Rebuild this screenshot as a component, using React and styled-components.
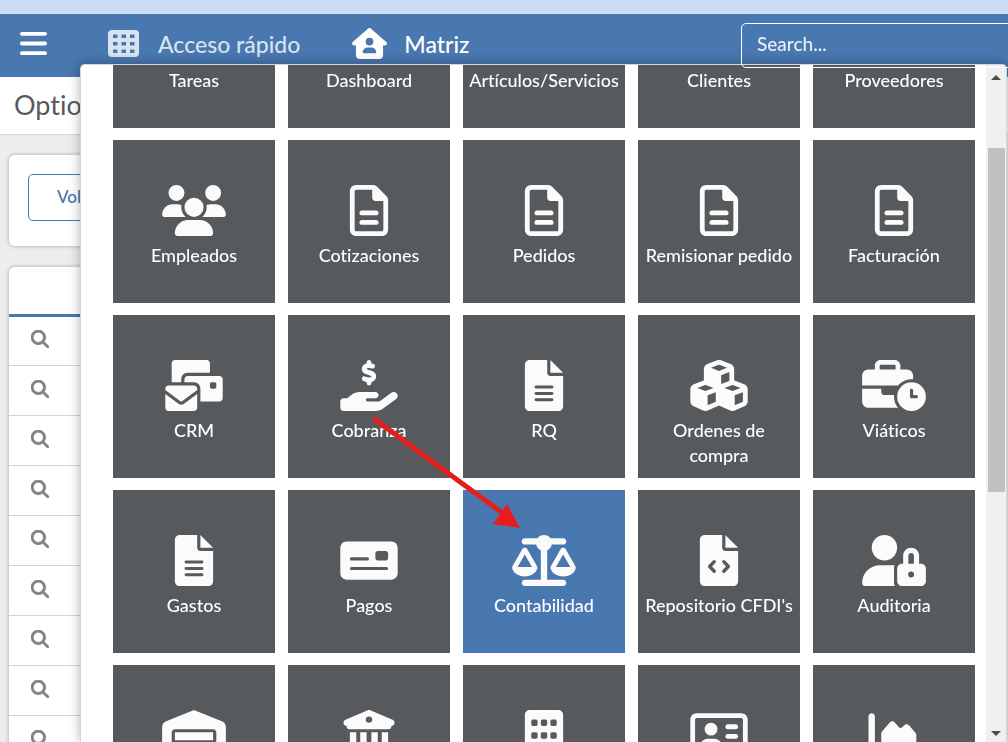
import React, { useLayoutEffect, useRef } from 'react';
import styled, { createGlobalStyle } from 'styled-components';
import {
    FaBars,
    FaBoxOpen,
    FaBuilding,
    FaBuildingColumns,
    FaBusinessTime,
    FaChartArea,
    FaChartPie,
    FaCubes,
    FaEnvelopesBulk,
    FaHandHoldingDollar,
    FaHouseUser,
    FaListCheck,
    FaMagnifyingGlass,
    FaMoneyCheck,
    FaRegAddressCard,
    FaRegFileLines,
    FaScaleBalanced,
    FaTruck,
    FaUserTie,
    FaUsers,
    FaWarehouse,
} from 'react-icons/fa6';

const GlobalStyle = createGlobalStyle`
    * {
        box-sizing: border-box;
    }

    body {
        margin: 0;
        background: #ededed;
        color: #575a5d;
        font-family: "Trebuchet MS", Lato, sans-serif;
        font-size: 18px;
        font-variant-ligatures: none;
    }

    button,
    input {
        font: inherit;
        font-variant-ligatures: none;
    }
`;

const Page = styled.div`
    height: 100vh;
    overflow: hidden;
    border-top: 14px solid #cbdcf6;
`;

const Header = styled.header`
    display: flex;
    align-items: center;
    height: 63px;
    padding-left: 20px;
    background: #4977b0;
    color: #fff;
`;

const MenuButton = styled.button`
    display: flex;
    padding: 0 0 4px;
    margin-right: 59px;
    border: none;
    background: none;
    color: inherit;
    cursor: pointer;

    svg {
        width: 27px;
        height: 31px;
    }
`;

const Nav = styled.nav`
    display: flex;
    flex: 1;
    gap: 52px;
    padding-bottom: 4px;
`;

const NavLink = styled.a`
    display: flex;
    align-items: center;
    gap: 17px;
    color: ${(props) => props.$active ? '#fff' : '#d9e2ef'};
    font-size: 23px;
    font-weight: 500;
    line-height: 32px;
    text-decoration: none;

    svg {
        width: 35px;
        height: 31px;
    }
`;

const SearchInput = styled.input`
    position: relative;
    z-index: 3;
    flex: none;
    width: 300px;
    height: 45px;
    margin-right: -33px;
    padding: 0 15px 4px;
    border: 1px solid #fff;
    border-radius: 5px;
    outline: none;
    background: transparent;
    color: #fff;
    font-size: 19px;
    font-weight: 500;

    &::placeholder {
        color: #e9eff7;
        opacity: 1;
    }
`;

const TitleBar = styled.div`
    height: 58px;
    padding: 0 14px;
    border-bottom: 1px solid #d6d6d6;
    background: #fff;
`;

const Title = styled.h1`
    margin: 0;
    font-size: 27px;
    font-weight: 400;
    line-height: 55px;
`;

const Content = styled.main`
    display: flex;
    flex-direction: column;
    gap: 21px;
    padding: 20px 9px;
`;

const Card = styled.section`
    padding: ${(props) => props.$padded ? '19px' : '0'};
    border-radius: 6px;
    background: #fff;
    box-shadow: 0 0 4px rgba(0, 0, 0, 0.3);
    overflow: hidden;
`;

const BackButton = styled.button`
    display: block;
    height: 47px;
    margin-bottom: 6px;
    padding: 0 28px 3px;
    border: 1px solid #4977b0;
    border-radius: 5px;
    background: #fff;
    color: #4977b0;
    font-size: 17px;
    font-weight: 500;
    cursor: pointer;
`;

const Table = styled.table`
    width: 100%;
    border-spacing: 0;
    table-layout: fixed;
`;

const HeadCell = styled.th`
    height: 50px;
    padding: 0;
    border-bottom: 3px solid #4977b0;
`;

const Cell = styled.td`
    height: 50px;
    padding: 0 22px 4px;
    border-top: 1px solid #d4d4d4;

    tr:first-child > & {
        height: 48px;
        border-top: none;
    }
`;

const RowButton = styled.button`
    display: flex;
    padding: 0;
    border: none;
    background: none;
    color: #808080;
    cursor: pointer;

    svg {
        stroke: currentColor;
        stroke-width: 20;
    }
`;

const Panel = styled.div`
    position: fixed;
    z-index: 2;
    top: 64px;
    right: 1px;
    bottom: 0;
    left: 80px;
    display: flex;
    border: 1px solid #d3d5d8;
    border-bottom: none;
    border-radius: 5px 5px 0 0;
    background: #fff;
    box-shadow: 0 0 12px rgba(0, 0, 0, 0.3);
    overflow: hidden;
`;

const PanelScroll = styled.div`
    flex: 1;
    overflow-y: scroll;
    scrollbar-width: none;
`;

const Tiles = styled.div`
    display: grid;
    grid-template-columns: repeat(5, 1fr);
    gap: 12px 13px;
    padding: 31px 11px 31px 32px;
`;

const TileButton = styled.button`
    display: flex;
    flex-direction: column;
    align-items: center;
    gap: 7px;
    height: 163px;
    padding: 45px 5px 0;
    border: none;
    background: ${(props) => props.$selected ? '#4977b0' : '#575a5d'};
    color: #fff;
    font-weight: 500;
    line-height: 25px;
    cursor: pointer;

    svg {
        flex: none;
        width: 64px;
        height: 51px;
        color: #fbfbfb;
    }
`;

const Scrollbar = styled.div`
    display: flex;
    flex-direction: column;
    align-items: center;
    width: 20px;
    padding: 10px 0 6px;
    background: #f0f0f0;
`;

const ScrollArrow = styled.span`
    border: 5px solid transparent;
    border-top: ${(props) => props.$up ? 'none' : '5px solid #4d4d4d'};
    border-bottom: ${(props) => props.$up ? '5px solid #4d4d4d' : 'none'};
`;

const ScrollTrack = styled.div`
    flex: 1;
    width: 17px;
    padding-top: 68px;
`;

const ScrollThumb = styled.div`
    height: 59%;
    background: #c1c1c1;
`;

const Pointer = styled.svg`
    position: fixed;
    z-index: 4;
    top: 410px;
    left: 365px;
    pointer-events: none;
`;

const GridIcon = () => (
    <svg viewBox="0 0 31 31" fill="currentColor" aria-hidden="true">
        <path
            fillRule="evenodd"
            d="M4 2h23a4 4 0 0 1 4 4v19a4 4 0 0 1-4 4H4a4 4 0 0 1-4-4V6a4 4 0 0 1 4-4z
            M5 6.500v3.500h4.500V6.500z M13.500 6.500v3.500H18V6.500z M22 6.500v3.500h4.500V6.500z
            M5 14v3.500h4.500V14z M13.500 14v3.500H18V14z M22 14v3.500h4.500V14z
            M5 21.500V25h4.500v-3.500z M13.500 21.500V25H18v-3.500z M22 21.500V25h4.500v-3.500z"
        />
    </svg>
);

const SHEET = 'M256 0v128h128L256 0zM224 128V0H48C21.500 0 0 21.500 0 48v416c0 26.500 21.500 48 48 48h288c26.500 0 48-21.500 48-48V160H256c-17.700 0-32-14.300-32-32z';

const FileIcon = () => (
    <svg viewBox="0 0 384 512" fill="currentColor" aria-hidden="true">
        <path d={SHEET} />
        <path d="M112 272h160M112 336h160M112 400h160" stroke="#575a5d" strokeWidth="30" strokeLinecap="round" />
    </svg>
);

const FileCodeIcon = () => (
    <svg viewBox="0 0 384 512" fill="currentColor" aria-hidden="true">
        <path d={SHEET} />
        <path
            d="M144 268l-46 48 46 48M240 268l46 48-46 48"
            fill="none"
            stroke="#575a5d"
            strokeWidth="34"
            strokeLinecap="round"
            strokeLinejoin="round"
        />
    </svg>
);

const UserLockIcon = () => (
    <svg viewBox="0 0 640 512" fill="currentColor" aria-hidden="true">
        <circle cx="224" cy="128" r="128" />
        <path d="M178 304h148c-4 10-6 21-6 32v144c0 12 3 22 8 32H30c-17 0-30-13-30-30 0-99 80-178 178-178z" />
        <path
            fillRule="evenodd"
            d="M412 288v-80c0-45 36-80 80-80s80 35 80 80v80h20c26 0 48 22 48 48v128c0 26-22 48-48 48H400c-26 0-48-22-48-48V336c0-26 22-48 48-48z
            M464 288h56v-80c0-16-12-28-28-28s-28 12-28 28z
            M492 366a30 30 0 1 0 0 60 30 30 0 0 0 0-60z"
        />
    </svg>
);

const tiles = [
    { label: 'Tareas', icon: FaListCheck },
    { label: 'Dashboard', icon: FaChartPie },
    { label: 'Artículos/Servicios', icon: FaBoxOpen },
    { label: 'Clientes', icon: FaUserTie },
    { label: 'Proveedores', icon: FaTruck },
    { label: 'Empleados', icon: FaUsers },
    { label: 'Cotizaciones', icon: FaRegFileLines },
    { label: 'Pedidos', icon: FaRegFileLines },
    { label: 'Remisionar pedido', icon: FaRegFileLines },
    { label: 'Facturación', icon: FaRegFileLines },
    { label: 'CRM', icon: FaEnvelopesBulk },
    { label: 'Cobranza', icon: FaHandHoldingDollar },
    { label: 'RQ', icon: FileIcon },
    { label: 'Ordenes de compra', icon: FaCubes },
    { label: 'Viáticos', icon: FaBusinessTime },
    { label: 'Gastos', icon: FileIcon },
    { label: 'Pagos', icon: FaMoneyCheck },
    { label: 'Contabilidad', icon: FaScaleBalanced, selected: true },
    { label: "Repositorio CFDI's", icon: FileCodeIcon },
    { label: 'Auditoria', icon: UserLockIcon },
    { icon: FaWarehouse },
    { icon: FaBuildingColumns },
    { icon: FaBuilding },
    { icon: FaRegAddressCard },
    { icon: FaChartArea },
];

const rows = [1, 2, 3, 4, 5, 6, 7, 8, 9];

function QuickAccess() {
    const scroller = useRef(null);

    // open on the second row of modules
    useLayoutEffect(() => {
        scroller.current.scrollTop = 131;
    }, []);

    return (
        <Panel>
            <PanelScroll ref={scroller}>
                <Tiles>
                    {tiles.map(({ label, icon: Icon, selected }, i) => (
                        <TileButton key={i} type="button" $selected={selected}>
                            <Icon />
                            {label && <span>{label}</span>}
                        </TileButton>
                    ))}
                </Tiles>
            </PanelScroll>
            <Scrollbar>
                <ScrollArrow $up />
                <ScrollTrack>
                    <ScrollThumb />
                </ScrollTrack>
                <ScrollArrow />
            </Scrollbar>
        </Panel>
    );
}

export default function App() {
    return (
        <Page>
            <GlobalStyle />
            <Header>
                <MenuButton type="button" aria-label="Menú"><FaBars /></MenuButton>
                <Nav>
                    <NavLink href="#acceso"><GridIcon />Acceso rápido</NavLink>
                    <NavLink href="#matriz" $active><FaHouseUser />Matriz</NavLink>
                </Nav>
                <SearchInput type="text" placeholder="Search..." aria-label="Search" />
            </Header>
            <TitleBar>
                <Title>Options</Title>
            </TitleBar>
            <Content>
                <Card $padded>
                    <BackButton type="button">Volver</BackButton>
                </Card>
                <Card>
                    <Table>
                        <thead>
                            <tr><HeadCell /></tr>
                        </thead>
                        <tbody>
                            {rows.map((row) => (
                                <tr key={row}>
                                    <Cell>
                                        <RowButton type="button" aria-label="Ver detalle"><FaMagnifyingGlass /></RowButton>
                                    </Cell>
                                </tr>
                            ))}
                        </tbody>
                    </Table>
                </Card>
            </Content>
            <QuickAccess />
            <Pointer width="160" height="125" viewBox="0 0 160 125" aria-hidden="true">
                <path d="M8 8l128 94" stroke="#e81c1c" strokeWidth="5" />
                <path d="M155 118l-27-4 14-20z" fill="#e81c1c" />
            </Pointer>
        </Page>
    );
}
